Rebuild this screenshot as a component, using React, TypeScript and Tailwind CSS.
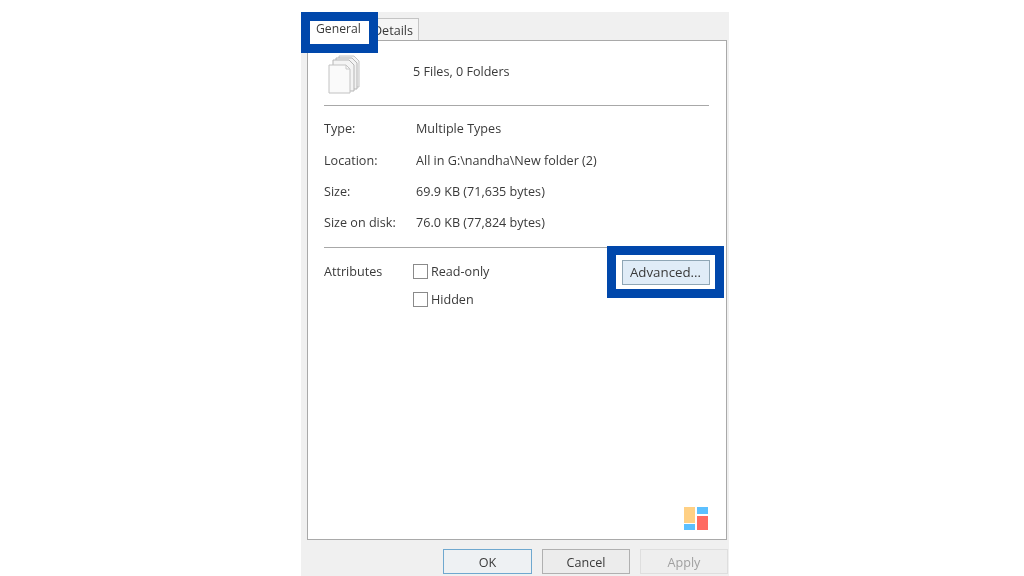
import React from "react";

const rows = [
  { label: "Type:", value: "Multiple Types" },
  { label: "Location:", value: "All in G:\\nandha\\New folder (2)" },
  { label: "Size:", value: "69.9 KB (71,635 bytes)" },
  { label: "Size on disk:", value: "76.0 KB (77,824 bytes)" },
];

function FilesIcon() {
  return (
    <svg width="34" height="40" viewBox="0 0 34 40" fill="none">
      <path d="M11 1h15l5 5v26H11z" fill="#f4f4f4" stroke="#c4c4c4" />
      <path d="M8 3h16l5 5v26H8z" fill="#f2f2f2" stroke="#b5b5b5" />
      <path d="M5 5h16l5 5v26H5z" fill="#f4f4f4" stroke="#b5b5b5" />
      <path d="M1 10h17l4 4v24H1z" fill="#fafafa" stroke="#c2c2c2" />
      <path d="M18 10v4h4" stroke="#c8c8c8" />
    </svg>
  );
}

function Logo() {
  return (
    <div className="absolute left-[376px] top-[466px] grid grid-cols-[11px_11px] gap-x-[2px]">
      <div className="flex flex-col gap-[1px]">
        <div className="h-[16px] bg-[#ffd084]" />
        <div className="h-[6px] bg-[#5cc0ff]" />
      </div>
      <div className="flex flex-col gap-[2px]">
        <div className="h-[7px] bg-[#5cc0ff]" />
        <div className="h-[14px] bg-[#ff6b62]" />
      </div>
    </div>
  );
}

function Check({ label }: { label: string }) {
  return (
    <div className="flex items-center h-[15px]">
      <div className="w-[15px] h-[15px] border border-[#8a8a8a] bg-white" />
      <span className="ml-[3px] pt-[1px]">{label}</span>
    </div>
  );
}

function FooterButton({ label, className }: { label: string; className: string }) {
  return (
    <div className={`h-[25px] pt-[4px] flex items-center justify-center border ${className}`}>
      {label}
    </div>
  );
}

export default function App() {
  return (
    <div className="w-[1024px] h-[576px] overflow-hidden bg-white pl-[301px] pt-[12px] font-['Open_Sans',sans-serif] text-[12.6px] text-[#3a3a3a]">
      <div className="relative w-[428px] h-[564px] bg-[#f0f0f0] blur-[0.5px]">
        {/* tabs */}
        <div className="flex h-[28px] pl-[9px] items-end">
          <div className="w-[60px] h-[24px] bg-white" />
          <div className="w-[49px] h-[22px] border border-b-0 border-[#c4c4c4] bg-[#f5f5f5] flex items-center justify-end pr-[5px] pt-[3px]">
            Details
          </div>
        </div>

        {/* panel */}
        <div className="relative ml-[6px] w-[420px] h-[500px] bg-white border border-[#a9a9a9] px-[16px]">
          <div className="flex items-center h-[65px] border-b border-[#a8a8a8] w-[385px]">
            <div className="ml-[4px] w-[85px] mt-[4px]">
              <FilesIcon />
            </div>
            <span className="mt-[-2px]">5 Files, 0 Folders</span>
          </div>

          <div className="flex flex-col pt-[8px] h-[142px] w-[385px] border-b border-[#a8a8a8]">
            {rows.map((row) => (
              <div key={row.label} className="flex items-center h-[31.3px] shrink-0">
                <div className="w-[92px]">{row.label}</div>
                <div>{row.value}</div>
              </div>
            ))}
          </div>

          <div className="flex pt-[16px]">
            <div className="w-[89px] leading-[15px]">Attributes</div>
            <div className="flex flex-col gap-[13px]">
              <Check label="Read-only" />
              <Check label="Hidden" />
            </div>
          </div>

          <Logo />
        </div>

        {/* footer */}
        <div className="flex justify-end gap-[10px] pr-[1px] pt-[9px]">
          <FooterButton label="OK" className="w-[89px] border-[#6fa8cf] bg-[#eef1f3]" />
          <FooterButton label="Cancel" className="w-[88px] border-[#b0b0b0] bg-[#ececec]" />
          <FooterButton label="Apply" className="w-[88px] border-[#dedede] bg-[#eeeeee] text-[#a0a0a0]" />
        </div>

        {/* callouts */}
        <div className="absolute left-0 top-0 w-[77px] h-[41px] border-[9px] border-[#0047ab] bg-white flex items-center justify-start">
          <span className="ml-[6px] mt-[-7px] text-[12.2px]">General</span>
        </div>
        <div className="absolute left-[306px] top-[234px] w-[117px] h-[52px] border-[9px] border-[#0047ab] bg-white flex items-center justify-center">
          <div className="w-[88px] h-[25px] pt-[2px] border border-[#8fa6b5] bg-[#e0ecf7] flex items-center justify-center text-[13.3px]">
            Advanced...
          </div>
        </div>
      </div>
    </div>
  );
}
